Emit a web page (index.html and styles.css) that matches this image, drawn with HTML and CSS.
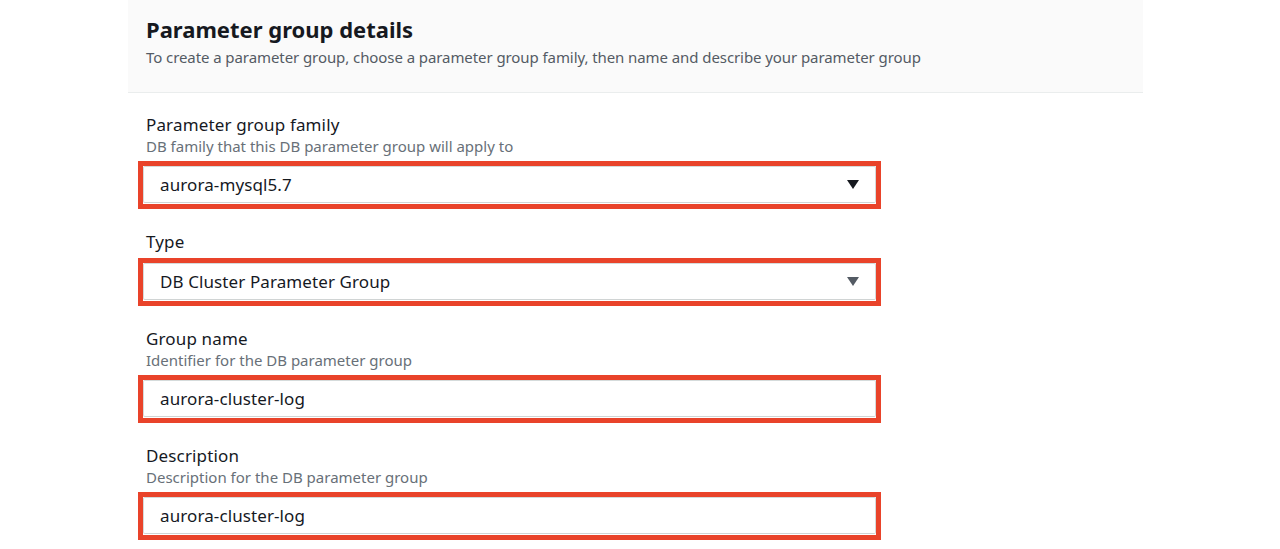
FILE: index.html
```html
<!DOCTYPE html>
<html lang="en">
<head>
<meta charset="utf-8">
<title>Parameter group details</title>
<link rel="stylesheet" href="styles.css">
</head>
<body>
<div class="page">
  <section class="panel">
    <header class="panel-header">
      <h2 class="panel-title">Parameter group details</h2>
      <p class="panel-subtitle">To create a parameter group, choose a parameter group family, then name and describe your parameter group</p>
    </header>
    <div class="panel-body">
      <div class="field">
        <div class="field-label">Parameter group family</div>
        <div class="field-desc">DB family that this DB parameter group will apply to</div>
        <div class="control marked">
          <div class="select">
            <span class="value">aurora-mysql5.7</span>
            <svg class="caret" width="12" height="9" viewBox="0 0 12 9"><path d="M0 0 H12 L6 9 Z" fill="#16191f"/></svg>
          </div>
        </div>
      </div>
      <div class="field">
        <div class="field-label">Type</div>
        <div class="control marked">
          <div class="select">
            <span class="value">DB Cluster Parameter Group</span>
            <svg class="caret" width="12" height="9" viewBox="0 0 12 9"><path d="M0 0 H12 L6 9 Z" fill="#545b64"/></svg>
          </div>
        </div>
      </div>
      <div class="field">
        <div class="field-label">Group name</div>
        <div class="field-desc">Identifier for the DB parameter group</div>
        <div class="control marked">
          <div class="input"><span class="value">aurora-cluster-log</span></div>
        </div>
      </div>
      <div class="field">
        <div class="field-label">Description</div>
        <div class="field-desc">Description for the DB parameter group</div>
        <div class="control marked">
          <div class="input"><span class="value">aurora-cluster-log</span></div>
        </div>
      </div>
    </div>
  </section>
</div>
</body>
</html>
```
FILE: styles.css
```css
html, body {
  margin: 0;
  padding: 0;
  background: #ffffff;
}
body {
  font-family: "Noto Sans", "Open Sans", Arial, sans-serif;
  color: #16191f;
  width: 1280px;
  height: 549px;
  overflow: hidden;
}
.page {
  padding-left: 128px;
}
.panel {
  width: 1015px;
}
.panel-header {
  height: 93px;
  box-sizing: border-box;
  background: #fafafa;
  border-bottom: 1px solid #eaeded;
  padding: 14px 18px 0;
}
.panel-title {
  margin: 0;
  font-size: 22px;
  line-height: 30px;
  font-weight: 700;
  color: #16191f;
}
.panel-subtitle {
  margin: 2px 0 0;
  font-size: 15px;
  line-height: 22px;
  letter-spacing: -0.08px;
  color: #545b64;
}
.panel-body {
  padding: 21px 18px 0;
}
.field {
  margin-bottom: 28px;
}
.field-label {
  font-size: 17px;
  line-height: 22px;
  letter-spacing: 0.15px;
  color: #16191f;
}
.field-desc {
  font-size: 15px;
  line-height: 20px;
  color: #687078;
}
.control {
  position: relative;
  width: 733px;
  margin-top: 10px;
  margin-left: -3px;
}
.marked::after {
  content: "";
  position: absolute;
  left: -5px;
  right: -5px;
  top: -5px;
  bottom: -6px;
  border: 5px solid #e9432a;
  pointer-events: none;
}
.select, .input {
  height: 37px;
  box-sizing: border-box;
  border: 1px solid #d5dbdb;
  border-bottom-color: #d0d4d4;
  border-radius: 2px;
  background: #ffffff;
  display: flex;
  align-items: center;
  padding: 0 16px 0 16px;
}
.value {
  flex: 1;
  font-size: 17px;
  letter-spacing: 0.1px;
  color: #16191f;
}
.caret {
  display: block;
  flex: none;
}
```
